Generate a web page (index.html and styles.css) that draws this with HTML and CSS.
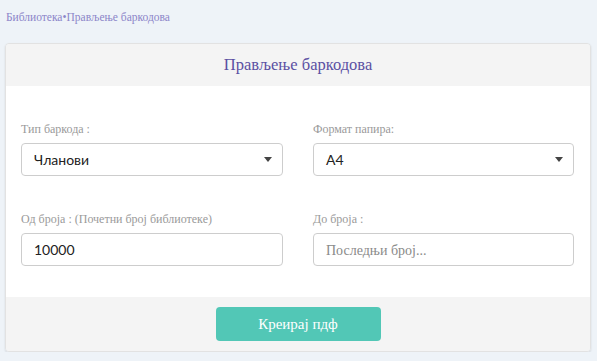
FILE: index.html
```html
<!DOCTYPE html>
<html lang="sr">
<head>
    <meta charset="UTF-8">
    <title>Прављење баркодова</title>
    <meta name="viewport" content="width=device-width, initial-scale=1.0">
    <link rel="stylesheet" href="styles.css">
</head>
<body>
    <div class="breadcrumb">Библиотека<span class="dot">•</span>Прављење баркодова</div>

    <div class="card">
        <div class="card-header">Прављење баркодова</div>
        <div class="card-body">
            <div class="field">
                <label>Тип баркода :</label>
                <div class="select">
                    <span>Чланови</span>
                    <span class="caret"></span>
                </div>
            </div>
            <div class="field">
                <label>Формат папира:</label>
                <div class="select">
                    <span>A4</span>
                    <span class="caret"></span>
                </div>
            </div>
            <div class="field">
                <label>Од броја : (Почетни број библиотеке)</label>
                <input class="input" type="text" value="10000">
            </div>
            <div class="field">
                <label>До броја :</label>
                <input class="input" type="text" placeholder="Последњи број...">
            </div>
        </div>
        <div class="card-footer">
            <button class="btn">Креирај пдф</button>
        </div>
    </div>
</body>
</html>
```

FILE: styles.css
```css
body {
    margin: 0;
    padding: 10px 5px 0 5px;
    background-color: #eef3f8;
    font-family: "Liberation Serif", serif;
}
.breadcrumb {
    font-size: 11.5px;
    color: #8c85c9;
    padding-left: 1px;
    height: 16px;
    line-height: 14px;
}
.card {
    margin-top: 17px;
    width: 584px;
    border: 1px solid #e2e2e2;
    border-radius: 4px;
    box-shadow: 0 1px 2px rgba(0, 0, 0, 0.12);
    overflow: hidden;
}
.card-header {
    background-color: #f4f4f4;
    height: 42px;
    line-height: 42px;
    text-align: center;
    font-size: 16.5px;
    color: #5b50a3;
}
.card-body {
    background-color: #fff;
    display: grid;
    grid-template-columns: 262px 261px;
    column-gap: 30px;
    row-gap: 36px;
    padding: 36px 15px 31px 15px;
}
.field label {
    display: block;
    font-size: 12px;
    color: #9a9a9a;
    height: 14px;
    line-height: 14px;
    margin-bottom: 7px;
}
.select, .input {
    box-sizing: border-box;
    width: 100%;
    height: 33px;
    border: 1px solid #cdcdcd;
    border-radius: 4px;
    background: #fff;
    font-family: Lato, "Open Sans", sans-serif;
    font-size: 14px;
    color: #222;
}
.select {
    display: flex;
    align-items: center;
    justify-content: space-between;
    padding: 0 10px 0 12px;
}
.caret {
    width: 0;
    height: 0;
    border-left: 4px solid transparent;
    border-right: 4px solid transparent;
    border-top: 5px solid #444;
}
.input {
    padding: 0 12px;
    outline: none;
}
.input::placeholder {
    color: #8a8a8a;
    font-family: "Liberation Serif", serif;
    font-size: 14px;
}
.card-footer {
    background-color: #f4f4f4;
    height: 54px;
    display: flex;
    justify-content: center;
    align-items: center;
}
.btn {
    width: 165px;
    height: 34px;
    border: none;
    border-radius: 4px;
    background-color: #52c7b6;
    color: #fff;
    font-family: "Liberation Serif", serif;
    font-size: 15px;
    cursor: pointer;
}
```
